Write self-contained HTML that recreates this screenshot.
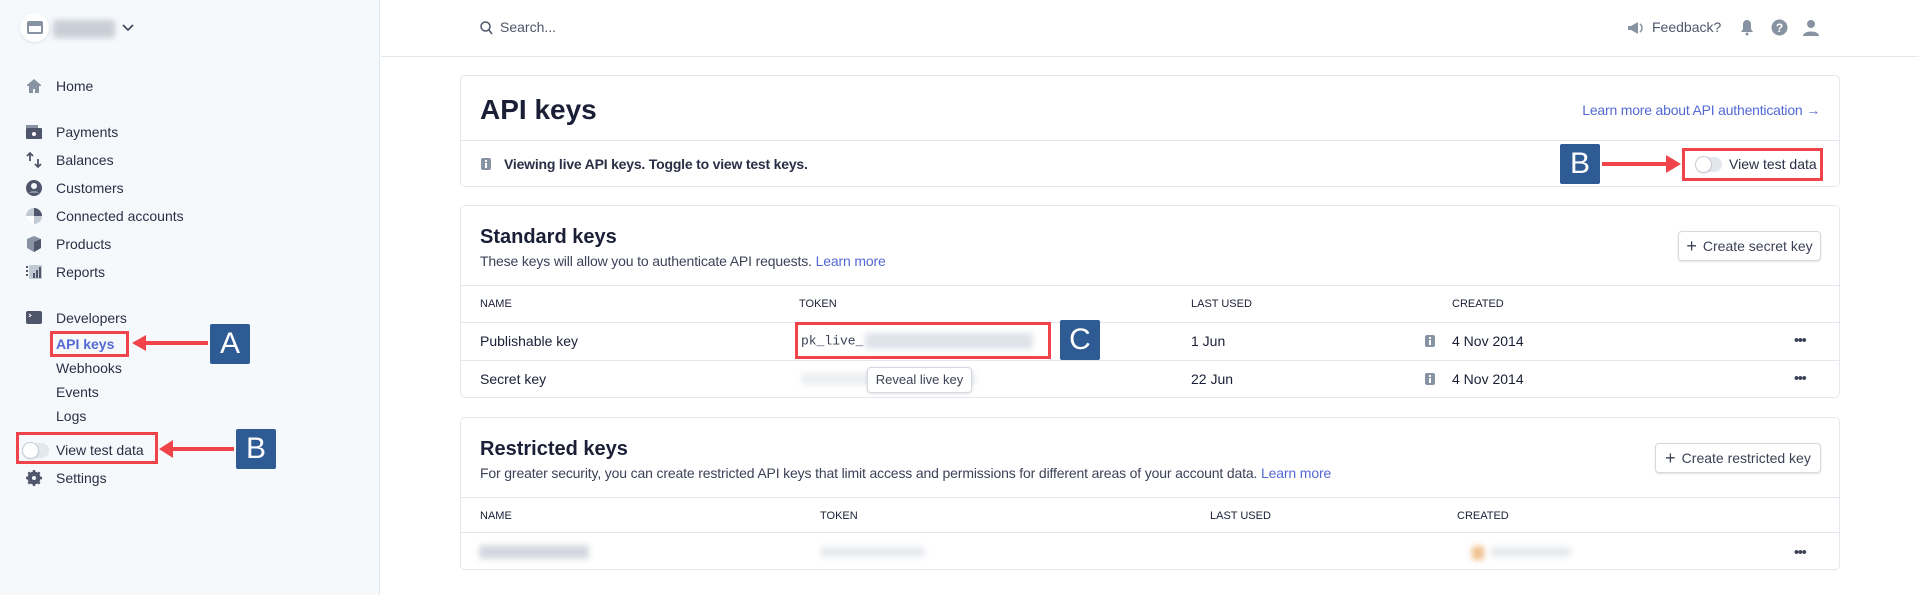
<!DOCTYPE html>
<html><head><meta charset="utf-8"><style>
*{box-sizing:border-box;margin:0;padding:0}
body{width:1919px;height:595px;position:relative;overflow:hidden;background:#fff;font-family:"Liberation Sans",sans-serif;color:#1a1f36;font-size:14px}
.a{position:absolute;white-space:nowrap}
.side{position:absolute;left:0;top:0;width:380px;height:595px;background:#f6f9fc;border-right:1px solid #e3e8ee}
.nav{position:absolute;left:56px;font-size:14px;color:#2a2f45;transform:translateY(-50%)}
.ico{position:absolute;left:26px;width:16px;height:16px;transform:translateY(-50%)}
.card{position:absolute;left:460px;width:1380px;border:1px solid #e3e8ee;border-radius:5px;background:#fff}
.hl{position:absolute;left:0;right:0;height:1px;background:#e3e8ee}
.th{font-size:11px;color:#1a1f36;transform:translateY(-50%)}
.td{font-size:14px;color:#1a1f36;transform:translateY(-50%)}
.red{position:absolute;border:3px solid #f0434a}
.badge{position:absolute;background:#2f5b94;color:#fff;font-size:30px;text-align:center;border-radius:2px}
.arrow{position:absolute;height:4px;background:#f0434a}
.btn{position:absolute;border:1px solid #d5d9e0;border-radius:4px;box-shadow:0 1px 2px rgba(0,0,0,.12);font-size:14px;color:#3c4257;display:flex;align-items:center;justify-content:center;gap:6px;background:#fff}
.tog{position:absolute;width:26px;height:15px;border-radius:8px;background:#e3e8ee}
.tog:after{content:"";position:absolute;left:0;top:0;width:15px;height:15px;border-radius:50%;background:#fff;box-shadow:0 0 0 1px #c8ccd3,0 1px 2px rgba(0,0,0,.2)}
.info{position:absolute;width:10px;height:12px;background:#8792a2;border-radius:2px;transform:translateY(-50%)}
.info:after{content:"";position:absolute;left:4px;top:5px;width:2px;height:5px;background:#fff}
.info:before{content:"";position:absolute;left:4px;top:2px;width:2px;height:2px;background:#fff}
.blur{position:absolute;background:#dfe3ea;filter:blur(3px);border-radius:3px}
.dots{font-size:14px;font-weight:bold;color:#3c4257;letter-spacing:-1px;transform:translateY(-60%)}
</style></head><body>
<div class="side">
 <div class="a" style="left:20px;top:13px;width:29px;height:29px;border-radius:50%;background:#fff;box-shadow:0 1px 3px rgba(0,0,0,.1)"><div style="position:absolute;left:7px;top:8px;width:16px;height:13px;background:#8792a2;border-radius:2px"></div><div style="position:absolute;left:9px;top:13px;width:12px;height:6px;background:#fff"></div></div>
 <div class="blur" style="left:53px;top:20px;width:62px;height:18px;background:#c9ced6"></div>
 <svg class="a" style="left:122px;top:24px" width="12" height="8"><path d="M1 1l5 5 5-5" stroke="#3c4257" stroke-width="1.6" fill="none"/></svg>
 <svg class="ico" style="top:86px" viewBox="0 0 16 16"><path d="M8 1L1 7v1h2v7h4v-4h2v4h4V8h2V7z" fill="#8792a2"/></svg><div class="nav" style="top:86px">Home</div>
 <svg class="ico" style="top:132px" viewBox="0 0 16 16"><rect x="0" y="4" width="16" height="11" rx="1" fill="#4f566b"/><rect x="0" y="1" width="12" height="3" fill="#8792a2"/><circle cx="8" cy="10" r="2" fill="#fff"/></svg><div class="nav" style="top:132px">Payments</div>
 <svg class="ico" style="top:160px" viewBox="0 0 16 16"><path d="M4 1v8M1 4l3-3 3 3M12 7v8M9 12l3 3 3-3" stroke="#4f566b" stroke-width="1.8" fill="none"/></svg><div class="nav" style="top:160px">Balances</div>
 <svg class="ico" style="top:188px" viewBox="0 0 16 16"><circle cx="8" cy="8" r="8" fill="#4f566b"/><circle cx="8" cy="6" r="3" fill="#f6f9fc"/><path d="M3 13c2-3 8-3 10 0" fill="#8792a2"/></svg><div class="nav" style="top:188px">Customers</div>
 <svg class="ico" style="top:216px" viewBox="0 0 16 16"><circle cx="8" cy="8" r="8" fill="#c1c9d2"/><path d="M8 0a8 8 0 0 1 8 8H8z" fill="#4f566b"/><path d="M8 8v8a8 8 0 0 1-8-8z" fill="#fff"/></svg><div class="nav" style="top:216px">Connected accounts</div>
 <svg class="ico" style="top:244px" viewBox="0 0 16 16"><path d="M8 0l7 3v9l-7 4-7-4V3z" fill="#8792a2"/><path d="M8 6v10l7-4V3z" fill="#4f566b"/></svg><div class="nav" style="top:244px">Products</div>
 <svg class="ico" style="top:272px" viewBox="0 0 16 16"><rect x="3" y="1" width="13" height="14" fill="#c1c9d2"/><rect x="0" y="2" width="2" height="2" fill="#4f566b"/><rect x="0" y="6" width="2" height="2" fill="#4f566b"/><rect x="0" y="10" width="2" height="2" fill="#4f566b"/><rect x="7" y="9" width="2" height="5" fill="#4f566b"/><rect x="10" y="6" width="2" height="8" fill="#4f566b"/><rect x="13" y="3" width="2" height="11" fill="#4f566b"/></svg><div class="nav" style="top:272px">Reports</div>
 <svg class="ico" style="top:318px" viewBox="0 0 16 16"><rect x="0" y="1" width="16" height="13" rx="2" fill="#4f566b"/><path d="M3 4l2 1.5L3 7" stroke="#fff" stroke-width="1" fill="none"/></svg><div class="nav" style="top:318px">Developers</div>
 <div class="nav" style="top:344px;color:#5469d4;font-weight:bold">API keys</div>
 <div class="nav" style="top:368px">Webhooks</div>
 <div class="nav" style="top:392px">Events</div>
 <div class="nav" style="top:416px">Logs</div>
 <div class="tog" style="left:23px;top:443px"></div><div class="nav" style="top:450px">View test data</div>
 <svg class="ico" style="top:478px" viewBox="0 0 16 16"><circle cx="8" cy="8" r="5" fill="none" stroke="#4f566b" stroke-width="3"/><path d="M8 0v16M0 8h16M2.3 2.3l11.4 11.4M13.7 2.3L2.3 13.7" stroke="#4f566b" stroke-width="2.4"/><circle cx="8" cy="8" r="2" fill="#f6f9fc"/></svg><div class="nav" style="top:478px">Settings</div>
</div>
<div class="red" style="left:50px;top:331px;width:79px;height:26px"></div>
<div class="arrow" style="left:142px;top:341px;width:66px"></div>
<svg class="a" style="left:132px;top:335px" width="14" height="16"><path d="M0 8L14 0v16z" fill="#f0434a"/></svg>
<div class="badge" style="left:210px;top:324px;width:40px;height:40px;line-height:40px">A</div>
<div class="red" style="left:16px;top:432px;width:142px;height:32px"></div>
<div class="arrow" style="left:170px;top:447px;width:64px"></div>
<svg class="a" style="left:159px;top:440px" width="14" height="18"><path d="M0 9L14 0v18z" fill="#f0434a"/></svg>
<div class="badge" style="left:236px;top:429px;width:40px;height:40px;line-height:40px">B</div>
<div class="hl" style="left:381px;top:56px"></div>
<svg class="a" style="left:480px;top:21px" width="13" height="14"><circle cx="5.5" cy="5.5" r="4.5" stroke="#4f566b" stroke-width="1.5" fill="none"/><path d="M9 9l3 4" stroke="#4f566b" stroke-width="1.5"/></svg>
<div class="a" style="left:500px;top:19px;font-size:14px;color:#4f566b">Search...</div>
<svg class="a" style="left:1627px;top:21px" width="16" height="14"><path d="M1 5h3l7-4v12l-7-4H1z" fill="#8792a2"/><path d="M13 3a5 5 0 0 1 0 8" stroke="#8792a2" stroke-width="1.5" fill="none"/></svg>
<div class="a" style="left:1652px;top:19px;font-size:14px;color:#4f566b">Feedback?</div>
<svg class="a" style="left:1740px;top:19px" width="14" height="17"><path d="M7 1a4 4 0 0 1 4 4v5l2 3H1l2-3V5a4 4 0 0 1 4-4z" fill="#8792a2"/><circle cx="7" cy="15" r="1.5" fill="#8792a2"/></svg>
<svg class="a" style="left:1771px;top:19px" width="17" height="17"><circle cx="8.5" cy="8.5" r="8" fill="#8792a2"/><text x="8.5" y="13" font-size="12" font-weight="bold" fill="#fff" text-anchor="middle" font-family="Liberation Sans">?</text></svg>
<svg class="a" style="left:1803px;top:19px" width="16" height="17"><circle cx="8" cy="5" r="4" fill="#8792a2"/><path d="M0 17c0-6 16-6 16 0z" fill="#8792a2"/></svg>
<div class="card" style="top:75px;height:112px">
 <div class="a" style="left:19px;top:18px;font-size:28px;font-weight:bold">API keys</div>
 <div class="a" style="right:19px;top:26px;font-size:14px;color:#5469d4;letter-spacing:-.2px">Learn more about API authentication →</div>
 <div class="hl" style="top:64px"></div>
 <div class="info" style="left:20px;top:88px"></div>
 <div class="a" style="left:43px;top:80px;font-size:14px;font-weight:bold;color:#2a2f45;letter-spacing:-.2px">Viewing live API keys. Toggle to view test keys.</div>
 <div class="tog" style="left:1235px;top:81px"></div>
 <div class="a" style="left:1268px;top:80px;font-size:14px;color:#2a2f45">View test data</div>
</div>
<div class="red" style="left:1682px;top:148px;width:141px;height:33px"></div>
<div class="badge" style="left:1560px;top:144px;width:40px;height:40px;line-height:40px">B</div>
<div class="arrow" style="left:1602px;top:162px;width:66px"></div>
<svg class="a" style="left:1666px;top:155px" width="15" height="18"><path d="M15 9L0 0v18z" fill="#f0434a"/></svg>
<div class="card" style="top:205px;height:193px">
 <div class="a" style="left:19px;top:20px;font-size:20px;font-weight:bold">Standard keys</div>
 <div class="a" style="left:19px;top:47px;font-size:14px;color:#3c4257;letter-spacing:-.15px">These keys will allow you to authenticate API requests. <span style="color:#5469d4">Learn more</span></div>
 <div class="btn" style="left:1217px;top:25px;width:143px;height:30px"><span style="font-size:18px">+</span>Create secret key</div>
 <div class="hl" style="top:79px"></div>
 <div class="a th" style="left:19px;top:98px">NAME</div><div class="a th" style="left:338px;top:98px">TOKEN</div><div class="a th" style="left:730px;top:98px">LAST USED</div><div class="a th" style="left:991px;top:98px">CREATED</div>
 <div class="hl" style="top:116px"></div>
 <div class="a td" style="left:19px;top:135px">Publishable key</div>
 <div class="a td" style="left:340px;top:135px;font-family:'Liberation Mono',monospace;font-size:13px;color:#3c4257">pk_live_</div>
 <div class="blur" style="left:404px;top:127px;width:168px;height:16px"></div>
 <div class="a td" style="left:730px;top:135px">1 Jun</div><div class="info" style="left:964px;top:135px"></div><div class="a td" style="left:991px;top:135px">4 Nov 2014</div><div class="a dots" style="left:1333px;top:135px">•••</div>
 <div class="hl" style="top:154px"></div>
 <div class="a td" style="left:19px;top:173px">Secret key</div>
 <div class="blur" style="left:340px;top:167px;width:175px;height:12px;background:#eceff3"></div>
 <div class="a td" style="left:730px;top:173px">22 Jun</div><div class="info" style="left:964px;top:173px"></div><div class="a td" style="left:991px;top:173px">4 Nov 2014</div><div class="a dots" style="left:1333px;top:173px">•••</div>
 <div class="a" style="left:406px;top:161px;width:105px;height:26px;border:1px solid #d5d9e0;border-radius:4px;background:#fff;box-shadow:0 1px 3px rgba(0,0,0,.12);font-size:13px;color:#3c4257;line-height:24px;text-align:center">Reveal live key</div>
</div>
<div class="red" style="left:795px;top:322px;width:256px;height:37px"></div>
<div class="badge" style="left:1060px;top:320px;width:40px;height:40px;line-height:40px">C</div>
<div class="card" style="top:417px;height:153px">
 <div class="a" style="left:19px;top:20px;font-size:20px;font-weight:bold">Restricted keys</div>
 <div class="a" style="left:19px;top:47px;font-size:14px;color:#3c4257;letter-spacing:-.15px">For greater security, you can create restricted API keys that limit access and permissions for different areas of your account data. <span style="color:#5469d4">Learn more</span></div>
 <div class="btn" style="left:1194px;top:25px;width:166px;height:30px"><span style="font-size:18px">+</span>Create restricted key</div>
 <div class="hl" style="top:79px"></div>
 <div class="a th" style="left:19px;top:98px">NAME</div><div class="a th" style="left:359px;top:98px">TOKEN</div><div class="a th" style="left:749px;top:98px">LAST USED</div><div class="a th" style="left:996px;top:98px">CREATED</div>
 <div class="hl" style="top:114px"></div>
 <div class="blur" style="left:18px;top:127px;width:110px;height:14px;background:#d3d8e0"></div>
 <div class="blur" style="left:359px;top:129px;width:105px;height:10px;background:#e6e9ee"></div>
 <div class="blur" style="left:1011px;top:128px;width:12px;height:14px;background:#f0c08e"></div>
 <div class="blur" style="left:1030px;top:129px;width:80px;height:10px;background:#e6e9ee"></div>
 <div class="a dots" style="left:1333px;top:135px">•••</div>
</div>
</body></html>
